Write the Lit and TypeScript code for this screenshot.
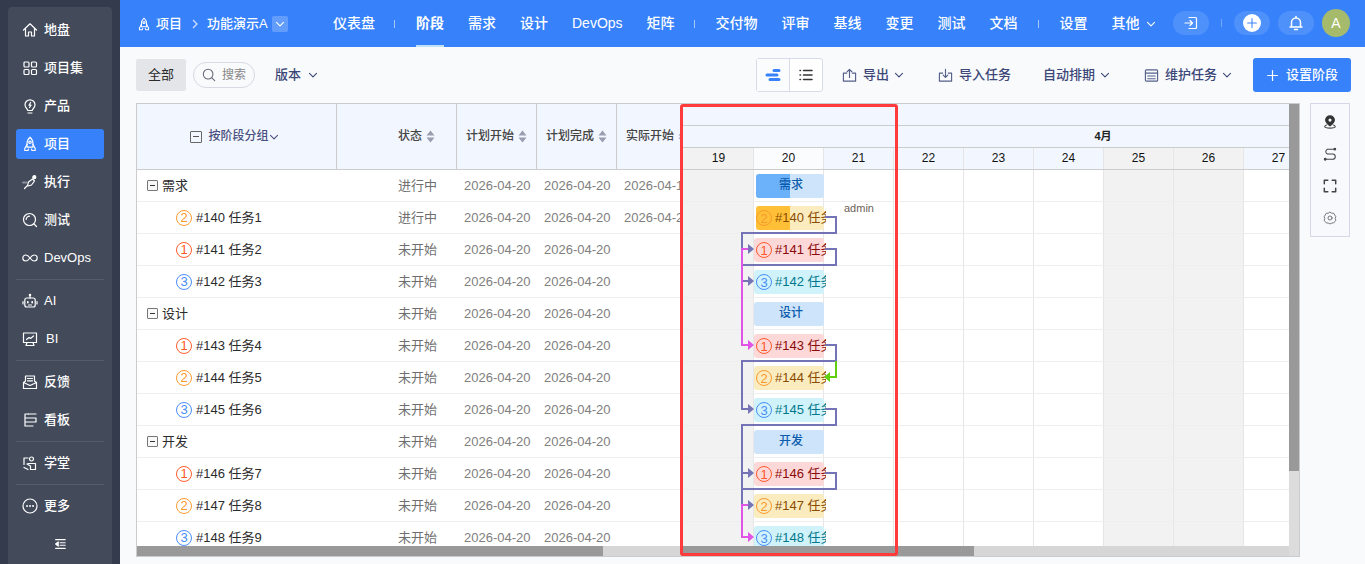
import { LitElement, html, css, svg } from "lit";
import { customElement } from "lit/decorators.js";

const ic = (body: unknown, size = 16, cls = "") => html`<svg class="ic ${cls}" width=${size} height=${size} viewBox="0 0 16 16" fill="none" stroke="currentColor" stroke-width="1.2" stroke-linecap="round" stroke-linejoin="round">${body}</svg>`;

const rocket = svg`<path d="M8 1.2c2 1.8 3 4 3 6.6v3.4H5V7.800c0-2.600 1-4.800 3-6.600z"/><circle cx="8" cy="6.300" r="1.200"/><path d="M5 8.500L2.800 12.500 2.800 14.500H6L6.500 13M11 8.500l2.200 4v2H10L9.500 13"/>`;
const chevron = (size = 10) => html`<svg class="chev" width=${size} height=${size} viewBox="0 0 10 10" fill="none" stroke="currentColor" stroke-width="1.100" stroke-linecap="round" stroke-linejoin="round"><path d="M1.500 3.300L5 6.800 8.500 3.300"/></svg>`;

const navIcons: Record<string, unknown> = {
  home: svg`<path d="M1.500 8L8 1.800 14.500 8M3.500 6.500v7.500h3V10h3v4h3V6.500"/>`,
  grid: svg`<rect x="2" y="2" width="5" height="5" rx="1"/><rect x="9.500" y="2" width="5" height="5" rx="1"/><rect x="2" y="9.500" width="5" height="5" rx="1"/><rect x="9.500" y="9.500" width="5" height="5" rx="1"/>`,
  bulb: svg`<path d="M5.800 12.500c0-1.500-2.800-2.500-2.800-5.700a5 5 0 0110 0c0 3.200-2.800 4.200-2.800 5.700zM6 15h4"/><path d="M8.600 4.500L7 7.200h2L7.500 9.500"/>`,
  rocket,
  run: svg`<path d="M2.500 14.500l3-3 1-3.500 4-3 2 2-3 4-3.500 1" /><circle cx="12.300" cy="3.200" r="1.500" fill="currentColor"/><path d="M1 8.500h4" stroke="#8c909c" stroke-width="2"/>`,
  test: svg`<circle cx="7.500" cy="7.500" r="6"/><path d="M12 12l2.500 2.500M7.500 4.200A3.300 3.300 0 004.200 7.500"/>`,
  inf: svg`<path d="M8 8c-1.500-2-2.600-3-4.200-3a3 3 0 000 6C5.400 11 6.500 10 8 8s2.600-3 4.200-3a3 3 0 010 6C10.600 11 9.500 10 8 8z"/>`,
  ai: svg`<rect x="2.800" y="5" width="10.400" height="9" rx="2"/><path d="M8 5V2.500M1 8.500v2.500M15 8.500v2.500"/><circle cx="8" cy="2" r=".7"/><path d="M5.800 9v.6M10.200 9v.6" stroke-width="1.800"/><path d="M6.500 12h3"/>`,
  bi: svg`<path d="M1.500 2h13v9.500h-13zM5 11.500L4 14.500M11 11.500l1 3M4 14.500h8"/><path d="M4.500 8.500l2.500-2 1.500 1L11.500 5"/>`,
  fb: svg`<path d="M3.500 7V2h9v5M1.500 8.500l6.500 3 6.500-3V14.500h-13zM1.500 8.500l2-1.500M14.500 8.500l-2-1.500M5.500 4.500h5M5.500 6.800h5"/>`,
  board: svg`<path d="M3 2h11M3 2v12M3 6h11v4H3M3 14h8"/><path d="M6.500 2v0"/>`,
  learn: svg`<circle cx="9.500" cy="4" r="2"/><path d="M6 8.500h7.500v6H8.500V11M8.500 11L5 9M2 3h4M2 3v6.500M2 12.500l4 2"/>`,
  more: svg`<circle cx="8" cy="8" r="7"/><path d="M5 8h.1M8 8h.1M11 8h.1" stroke-width="1.800"/>`,
  fold: svg`<path d="M3 3h11M8 6.500h6M8 9.500h6M3 13h11"/><path d="M6 5.500L3 8l3 2.500z" fill="currentColor"/>`,
};

type Row = { name: string; kind: "g" | "t"; p?: number; status: string; actual?: string };
const rows: Row[] = [
  { name: "需求", kind: "g", status: "进行中", actual: "2026-04-18" },
  { name: "#140 任务1", kind: "t", p: 2, status: "进行中", actual: "2026-04-20" },
  { name: "#141 任务2", kind: "t", p: 1, status: "未开始" },
  { name: "#142 任务3", kind: "t", p: 3, status: "未开始" },
  { name: "设计", kind: "g", status: "未开始" },
  { name: "#143 任务4", kind: "t", p: 1, status: "未开始" },
  { name: "#144 任务5", kind: "t", p: 2, status: "未开始" },
  { name: "#145 任务6", kind: "t", p: 3, status: "未开始" },
  { name: "开发", kind: "g", status: "未开始" },
  { name: "#146 任务7", kind: "t", p: 1, status: "未开始" },
  { name: "#147 任务8", kind: "t", p: 2, status: "未开始" },
  { name: "#148 任务9", kind: "t", p: 3, status: "未开始" },
];

const days = [
  { d: "19", w: 73, off: true, first: true },
  { d: "20", w: 70, today: true },
  { d: "21", w: 70 },
  { d: "22", w: 70 },
  { d: "23", w: 70 },
  { d: "24", w: 70 },
  { d: "25", w: 70, off: true },
  { d: "26", w: 70, off: true },
  { d: "27", w: 70 },
];

const sideGroups = [
  [["home", "地盘"], ["grid", "项目集"], ["bulb", "产品"], ["rocket", "项目", 1], ["run", "执行"], ["test", "测试"], ["inf", "DevOps"]],
  [["ai", "AI"], ["bi", "BI"]],
  [["fb", "反馈"], ["board", "看板"]],
  [["learn", "学堂"]],
  [["more", "更多"]],
] as [string, string, number?][][];

const purple = "#7473b6";
const links = svg`
  <g fill="none" stroke-width="2">
    <path stroke=${purple} d="M825 217H836V233H742V249H749"/>
    <path stroke=${purple} d="M825 249H836V265H742V281H749"/>
    <path stroke=${purple} d="M825 345H836V361H742V409H749"/>
    <path stroke=${purple} d="M825 409H836V425H742V489M742 473H749"/>
    <path stroke=${purple} d="M825 473H836V489H742V505H749"/>
    <path stroke="#5fcf10" d="M836 361V377H829"/>
    <path stroke="#e055e8" d="M749 249H742V345H749"/>
    <path stroke="#e055e8" d="M749 505H742V537H749"/>
  </g>
  <g fill=${purple}>
    <path d="M748 244L754 249 748 254z"/><path d="M748 276L754 281 748 286z"/>
    <path d="M748 404L754 409 748 414z"/><path d="M748 468L754 473 748 478z"/>
    <path d="M748 500L754 505 748 510z"/>
  </g>
  <path fill="#e055e8" d="M748 340L754 345 748 350zM748 532L754 537 748 542z"/>
  <path fill="#5fcf10" d="M830 372L824 377 830 382z"/>
`;

@customElement("app-root")
export class AppRoot extends LitElement {
  static styles = css`
    :host { display: flex; width: 100%; height: 100vh; overflow: hidden; background: #f9fafc; color: #2b2b2b;
      font: 13px/1.2 "Liberation Sans", "Noto Sans CJK SC", sans-serif; }
    svg { display: block; flex: none; }
    .side { width: 120px; flex: none; box-sizing: border-box; background: #333b4d; padding: 7px 8px 0; }
    .panel { height: 100%; box-sizing: border-box; background: #434a5a; border-radius: 4px 4px 0 0; padding: 8px 8px 0; color: #fff; }
    .sgroup { display: flex; flex-direction: column; gap: 8px; }
    .sitem { height: 30px; display: flex; align-items: center; gap: 6px; padding-left: 6px; border-radius: 3px; font-weight: 500; }
    .sitem.on { background: #3782fb; }
    .bi-label { margin-left: 2px; }
    .sdiv { height: 1px; background: #565c6b; margin: 6px 0; }
    .fold { height: 30px; margin-top: 8px; display: flex; justify-content: center; align-items: center; }
    .main { flex: 1; min-width: 0; display: flex; flex-direction: column; }
    .top { height: 47px; flex: none; background: #3782fb; color: #fff; display: flex; align-items: center; position: relative; }
    .crumb { display: flex; align-items: center; margin-left: 17px; width: 184px; font-weight: 500; flex: none; }
    .crumb .t1 { margin-left: 5px; }
    .crumb .sep { margin: 0 9px 0 10px; opacity: .75; }
    .crumb .drop { width: 16px; height: 16px; margin-left: 4px; border-radius: 2px; background: rgba(255,255,255,.22); display: flex; align-items: center; justify-content: center; flex: none; }
    .nav { display: flex; align-items: center; height: 47px; font-size: 14px; font-weight: 500; }
    .nav a { margin: 0 12px; height: 47px; box-sizing: border-box; white-space: nowrap; display: flex; align-items: center; gap: 6px; }
    .nav a.on { font-weight: 700; border-bottom: 2px solid #bfe0f5; padding-top: 2px; }
    .nsep { width: 1px; height: 8px; background: rgba(255,255,255,.55); margin: 0 9px 0 7px; flex: none; }
    .nsep.b { margin: 0 9px 0 8px; }
    .tools { display: flex; align-items: center; position: absolute; right: 15px; top: 9px; }
    .pill { width: 36px; height: 24px; border-radius: 12px; background: rgba(255,255,255,.12); display: flex; align-items: center; justify-content: center; }
    .pill.next { margin-left: 8px; }
    .tsep { width: 1px; height: 8px; background: rgba(255,255,255,.3); margin: 0 12px; }
    .plus { width: 18px; height: 18px; border-radius: 50%; background: #fff; color: #3782fb; display: flex; align-items: center; justify-content: center; }
    .avatar { width: 28px; height: 28px; border-radius: 50%; background: #a5bb6b; font-size: 14px; display: flex; align-items: center; justify-content: center; margin-left: 8px; }
    .body { flex: 1; min-height: 0; box-sizing: border-box; padding: 11px 14px 7px 16px; display: flex; flex-direction: column; gap: 11px; }
    .bar { height: 34px; flex: none; display: flex; align-items: center; }
    .all { width: 50px; height: 32px; background: #e4e5e9; border-radius: 2px; display: flex; align-items: center; justify-content: center; }
    .search { width: 62px; height: 26px; box-sizing: border-box; margin-left: 7px; border: 1px solid #d7d9e3; border-radius: 13px; display: flex; align-items: center; gap: 6px; padding-left: 8px; font-size: 12px; color: #888; }
    .search svg { color: #667; }
    .link { color: #3c4778; display: flex; align-items: center; white-space: nowrap; font-weight: 500; }
    .link .chev { margin-left: 5px; }
    .link .lead { margin-right: 6px; color: #55608a; }
    .ver { margin-left: 20px; }
    .ver .chev { margin-left: 7px; }
    .spacer { flex: 1; }
    .toggle { width: 67px; height: 34px; box-sizing: border-box; border: 1px solid #d8dbe8; border-radius: 3px; display: flex; background: #fff; }
    .toggle > div { flex: 1; display: flex; align-items: center; justify-content: center; color: #333; }
    .toggle > div.blue { color: #3782fb; background: #fbfcfe; }
    .toggle > div + div { border-left: 1px solid #d8dbe8; }
    .a1 { margin-left: 19px; } .a2 { margin-left: 34px; } .a3 { margin-left: 32px; } .a4 { margin-left: 34px; }
    .add { margin-left: 21px; width: 98px; height: 34px; background: #3782fb; color: #fff; border-radius: 3px; display: flex; align-items: center; justify-content: center; gap: 7px; font-weight: 500; }
    .work { flex: 1; min-height: 0; display: flex; gap: 10px; }
    .table { width: 1164px; flex: none; box-sizing: border-box; border: 1px solid #ccc; display: flex; position: relative; background: #fff; overflow: hidden; }
    .pane { display: flex; flex-direction: column; min-height: 0; overflow: hidden; flex: none; }
    .left { width: 544px; }
    .gantt { width: 608px; }
    .hs { height: 10px; flex: none; background: #d6d6d6; }
    .hs i { display: block; height: 100%; background: #999; }
    .vs { width: 10px; flex: none; background: #dcdcdc; }
    .vs i { display: block; width: 100%; height: 367px; background: #999; }
    .lbody { flex: 1; min-height: 0; overflow: hidden; }
    .grid { display: grid; grid-template-columns: 200px 120px 80px 80px 80px; width: 560px; }
    .th { height: 66px; box-sizing: border-box; background: #f2f6fe; border-bottom: 1px solid #ccc; border-right: 1px solid #ccc; display: flex; align-items: center; font-size: 12px; font-weight: 500; color: #444; white-space: nowrap; }
    .th.name { justify-content: center; color: #4a5080; padding-right: 4px; gap: 6px; }
    .th.name .chev { margin-left: -6px; }
    .th.st { padding-left: 61px; }
    .th.d { padding-left: 9px; }
    .box { width: 12px; height: 12px; box-sizing: border-box; border: 1px solid #666; border-radius: 1px; position: relative; display: block; flex: none; }
    .box::after { content: ""; position: absolute; left: 2px; right: 2px; top: 4px; height: 1px; background: #555; }
    .sort { margin-left: 4px; flex: none; color: #9a9db0; }
    .td { height: 32px; box-sizing: border-box; border-bottom: 1px solid #eee; display: flex; align-items: center; white-space: nowrap; overflow: hidden; }
    .td.g { padding-left: 10px; gap: 4px; }
    .td.g .box { width: 11px; height: 11px; border-color: #777; background: #f8f8f8; }
    .td.g .box::after { top: 4px; background: #333; }
    .td.t { padding-left: 39px; gap: 4px; }
    .td.st { padding-left: 61px; color: #6f6f6f; }
    .td.d { padding-left: 7px; color: #808080; }
    .pr { width: 16px; height: 16px; box-sizing: border-box; border-radius: 50%; border: 1px solid currentColor; display: flex; align-items: center; justify-content: center; font-size: 13px; line-height: 1; flex: none; }
    .p1 { color: #ff5a2b; } .p2 { color: #f99a2e; } .p3 { color: #4a8cf7; }
    .ghead { height: 66px; flex: none; box-sizing: border-box; background: #f2f6fe; border-bottom: 1px solid #ccc; display: flex; flex-direction: column; }
    .gh1 { height: 22px; flex: none; box-sizing: border-box; border-bottom: 1px solid #ccc; }
    .gh2 { height: 22px; flex: none; box-sizing: border-box; border-bottom: 1px solid #ccc; display: flex; align-items: center; justify-content: center; font-size: 11px; font-weight: 700; color: #222; padding-left: 236px; padding-top: 1px; }
    .gh3 { flex: 1; display: flex; overflow: hidden; }
    .day { box-sizing: border-box; border-right: 1px solid #e6e6e6; display: flex; align-items: center; justify-content: center; font-size: 12px; color: #111; flex: none; }
    .day.off { background: #f2f2f2; }
    .day.today { background: #fbfcfe; }
    .day.first { padding-left: 3px; }
    .canvas { flex: 1; min-height: 0; position: relative; overflow: hidden; }
    .cols { position: absolute; inset: 0; display: flex; overflow: hidden; }
    .col { box-sizing: border-box; border-right: 1px solid #e6e6e6; flex: none; height: 100%; }
    .col.off { background: #f2f2f2; }
    .hline { position: absolute; left: 0; right: 0; height: 1px; background: #eee; }
    .gbar { position: absolute; height: 24px; overflow: hidden; display: flex; align-items: center; white-space: nowrap; }
    .gbar .bg { position: absolute; top: 0; bottom: 0; border-radius: 3px; }
    .gbar .pg { position: absolute; top: 0; bottom: 0; left: 2px; width: 34px; border-radius: 3px 0 0 3px; }
    .gbar .lbl { position: relative; display: flex; align-items: center; gap: 3px; padding-left: 2px; }
    .gbar.sum .lbl { justify-content: center; width: 74px; padding: 0 0 2px; font-size: 12px; font-weight: 500; }
    .links { position: absolute; left: 0; top: 0; }
    .admin { position: absolute; left: 163px; top: 32px; font-size: 11px; line-height: 13px; color: #6e6257; }
    .mark { position: absolute; left: 543px; top: 0; width: 218px; height: 452px; box-sizing: border-box; border: 3px solid #ff3b3b; border-radius: 3px; pointer-events: none; }
    .rail { width: 40px; height: 134px; box-sizing: border-box; flex: none; border: 1px solid #d5d8e8; background: #f8f9fc; display: flex; flex-direction: column; align-items: center; padding-top: 11px; gap: 18px; color: #444; }
    .gear { color: #666; }
  `;

  private sort() {
    return html`<svg class="sort" width="9" height="13" viewBox="0 0 9 13" fill="currentColor"><path d="M4.500 .5L8.500 5.500H.5zM4.500 12.500L.5 7.500H8.500z"/></svg>`;
  }

  private bar(r: Row, i: number) {
    const pal: Record<number, [string, string]> = {
      1: ["#fdd8d8", "#8b0a0a"],
      2: ["#fbecc0", "#8a4b00"],
      3: ["#d0f3fb", "#00788c"],
    };
    const first = i < 2;
    const [bg, fg] = r.kind === "g" ? ["#cde4fb", "#0b5cad"] : pal[r.p!];
    const pg = i === 0 ? "#6bb2fb" : "#ffc038";
    const geo = `left:73px;top:${i * 32 + 4}px;width:${r.kind === "g" ? 74 : 72}px`;
    const bgGeo = `left:${first ? 2 : 0}px;width:${first ? 68 : 70}px;background:${bg}`;
    return html`<div class="gbar ${r.kind === "g" ? "sum" : ""}" style=${geo}>
      <div class="bg" style=${bgGeo}></div>
      ${first ? html`<div class="pg" style="background:${pg}"></div>` : ""}
      <div class="lbl" style="color:${fg}">
        ${r.kind === "t" ? html`<span class="pr p${r.p}">${r.p}</span>` : ""}<span>${r.name}</span>
      </div>
    </div>`;
  }

  render() {
    const navA = ["需求", "设计", "DevOps", "矩阵"];
    const navB = ["交付物", "评审", "基线", "变更", "测试", "文档"];
    return html`
      <aside class="side"><div class="panel">
        ${sideGroups.map((g, gi) => html`
          ${gi ? html`<div class="sdiv"></div>` : ""}
          <div class="sgroup">
            ${g.map(([k, t, on]) => html`<div class="sitem ${on ? "on" : ""}">${ic(navIcons[k])}<span class=${t === "BI" ? "bi-label" : ""}>${t}</span></div>`)}
          </div>`)}
        <div class="fold">${ic(navIcons.fold, 14)}</div>
      </div></aside>
      <div class="main">
        <header class="top">
          <div class="crumb">
            ${ic(rocket, 14)}<span class="t1">项目</span>
            <svg class="sep" width="6" height="10" viewBox="0 0 6 10" fill="none" stroke="currentColor" stroke-width="1.300"><path d="M1 1l4 4-4 4"/></svg>
            <span>功能演示A</span><span class="drop">${chevron()}</span>
          </div>
          <nav class="nav">
            <a>仪表盘</a><span class="nsep"></span><a class="on">阶段</a>
            ${navA.map((n) => html`<a>${n}</a>`)}
            <span class="nsep"></span>
            ${navB.map((n) => html`<a>${n}</a>`)}
            <span class="nsep b"></span>
            <a>设置</a><a>其他${chevron()}</a>
          </nav>
          <div class="tools">
            <div class="pill">${ic(svg`<path d="M6 2.500h6.500a1 1 0 011 1v9a1 1 0 01-1 1H6M2 8h7.500M7 5.500L9.500 8 7 10.500"/>`)}</div>
            <span class="tsep"></span>
            <div class="pill"><span class="plus">${ic(svg`<path d="M8 3v10M3 8h10"/>`, 14)}</span></div>
            <div class="pill next">${ic(svg`<path d="M3.500 12V7.500a4.500 4.500 0 019 0V12zM2 12h12M6.500 14.500h3M8 1.500v1" stroke-width="1.500"/>`)}</div>
            <div class="avatar">A</div>
          </div>
        </header>
        <div class="body">
          <div class="bar">
            <div class="all">全部</div>
            <div class="search">${ic(svg`<circle cx="7" cy="7" r="5.500"/><path d="M11 11l3.500 3.500"/>`, 14)}<span>搜索</span></div>
            <div class="link ver">版本${chevron()}</div>
            <div class="spacer"></div>
            <div class="toggle">
              <div class="blue">${ic(svg`<path d="M9 3.500h5M2 8h10M5 12.500h9" stroke-width="3"/>`, 16)}</div>
              <div>${ic(svg`<path d="M5.500 3.500H14M5.500 8H14M5.500 12.500H14M2 3.500h.5M2 8h.5M2 12.500h.5" stroke-width="1.500"/>`, 16)}</div>
            </div>
            <div class="link a1"><span class="lead">${ic(svg`<path d="M5 5.500H1.500v8.500h13V5.500H11M8 10V1.500M5.500 4L8 1.500 10.500 4"/>`, 15)}</span>导出${chevron()}</div>
            <div class="link a2"><span class="lead">${ic(svg`<path d="M5 5.500H1.500v8.500h13V5.500H11M8 1.500V10M5.500 7.500L8 10l2.500-2.500"/>`, 15)}</span>导入任务</div>
            <div class="link a3">自动排期${chevron()}</div>
            <div class="link a4"><span class="lead">${ic(svg`<rect x="1.500" y="2" width="13" height="12" rx="1"/><path d="M1.500 5.500h13M4 8.500h8M4 11.500h8"/>`, 15)}</span>维护任务${chevron()}</div>
            <div class="add">${ic(svg`<path d="M8 2v12M2 8h12" stroke-width="1.500"/>`, 13)}<span>设置阶段</span></div>
          </div>
          <div class="work">
            <div class="table">
              <div class="pane left">
                <div class="lbody">
                  <div class="grid">
                    <div class="th name"><span class="box"></span><span>按阶段分组</span>${chevron()}</div>
                    <div class="th st">状态${this.sort()}</div>
                    <div class="th d">计划开始${this.sort()}</div>
                    <div class="th d">计划完成${this.sort()}</div>
                    <div class="th d">实际开始${this.sort()}</div>
                    ${rows.map((r) => html`
                      <div class="td ${r.kind}">
                        ${r.kind === "g" ? html`<span class="box"></span>` : html`<span class="pr p${r.p}">${r.p}</span>`}
                        <span>${r.name}</span>
                      </div>
                      <div class="td st">${r.status}</div>
                      <div class="td d">2026-04-20</div>
                      <div class="td d">2026-04-20</div>
                      <div class="td d">${r.actual ?? ""}</div>`)}
                  </div>
                </div>
                <div class="hs"><i style="width:466px"></i></div>
              </div>
              <div class="pane gantt">
                <div class="ghead">
                  <div class="gh1"></div>
                  <div class="gh2">4月</div>
                  <div class="gh3">${days.map((d) => html`<div class="day ${d.off ? "off" : ""} ${d.today ? "today" : ""} ${d.first ? "first" : ""}" style="width:${d.w}px">${d.d}</div>`)}</div>
                </div>
                <div class="canvas">
                  <div class="cols">${days.map((d) => html`<div class="col ${d.off ? "off" : ""}" style="width:${d.w}px"></div>`)}</div>
                  ${rows.map((_, i) => html`<div class="hline" style="top:${i * 32 + 31}px"></div>`)}
                  ${rows.map((r, i) => this.bar(r, i))}
                  <div class="admin">admin</div>
                  <svg class="links" width="608" height="376" viewBox="681 170 608 376">${links}</svg>
                </div>
                <div class="hs"><i style="width:293px"></i></div>
              </div>
              <div class="vs"><i></i></div>
              <div class="mark"></div>
            </div>
            <div class="rail">
              ${ic(svg`<path d="M8 1c3 0 5 2.200 5 4.800C13 9 8 12.500 8 12.500S3 9 3 5.800C3 3.200 5 1 8 1z" fill="#333" stroke="#333"/><circle cx="8" cy="5.800" r="1.800" fill="#f8f9fc" stroke="none"/><path d="M4 11.500c-1.500.6-2 1.200-2 1.700 0 1 2.500 1.800 6 1.800s6-.8 6-1.800c0-.5-.5-1.100-2-1.700"/>`, 14)}
              ${ic(svg`<path d="M14 2.500H5a3 3 0 000 5.500h6a3 3 0 010 6H2"/><circle cx="13.500" cy="2.500" r="1" fill="currentColor"/><circle cx="2.500" cy="14" r="1" fill="currentColor"/>`, 14)}
              ${ic(svg`<path d="M1.500 5.500v-4h4M10.500 1.500h4v4M14.500 10.500v4h-4M5.500 14.500h-4v-4" stroke-width="1.700"/>`, 14)}
              ${ic(svg`<path d="M8 1.300l2 1.200 2.300.1 1.100 2 1.300 1.900L13.900 8.500l.8 2-1.300 1.800-1.100 1.300-2.300.2L8 14.800l-2-1-2.300-.2-1.100-1.300-1.300-1.800.8-2-.8-2 1.300-1.900 1.100-2L6 2.500z" stroke-width="1"/><circle cx="8" cy="8" r="2.300" stroke-width="1"/>`, 14, "gear")}
            </div>
          </div>
        </div>
      </div>
    `;
  }
}
